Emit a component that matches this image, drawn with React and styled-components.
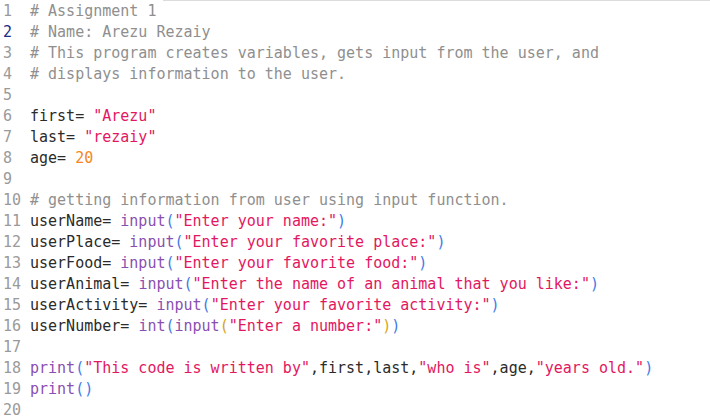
import React from 'react'
import styled, { createGlobalStyle } from 'styled-components'

const GlobalStyle = createGlobalStyle`
    html, body {
        margin: 0;
        padding: 0;
        background: #ffffff;
    }
`

const colors = {
    comment: '#8f8f8f',
    str: '#e3175f',
    num: '#f5871f',
    fn: '#8a4fb0',
    paren: '#3f7be6',
    paren2: '#d9a41a',
    name: '#2b2b2b'
}

const Page = styled.div`
    width: 710px;
    height: 420px;
    overflow: hidden;
    display: flex;
    flex-direction: column;
`

const TopEdge = styled.div`
    height: 3px;
    margin-left: 163px;
    border-top: 1px solid #dcdcdc;
    box-sizing: border-box;
`

const Editor = styled.div`
    display: flex;
    flex-direction: column;
    font-family: "DejaVu Sans Mono", "Liberation Mono", monospace;
    font-size: 15px;
    line-height: 21px;
    white-space: pre;
`

const Row = styled.div`
    display: flex;
    height: 21px;
`

const Gutter = styled.span`
    width: 27px;
    padding-left: 3px;
    color: ${p => p.$active ? '#1b2a8a' : '#9a9a9a'};
`

const Code = styled.span`
    color: ${colors.name};
`

const Tok = styled.span`
    color: ${p => colors[p.$k]};
`

const C = (t) => <Tok $k="comment">{t}</Tok>
const S = (t) => <Tok $k="str">{t}</Tok>
const N = (t) => <Tok $k="num">{t}</Tok>
const F = (t) => <Tok $k="fn">{t}</Tok>
const P = (t) => <Tok $k="paren">{t}</Tok>
const Q = (t) => <Tok $k="paren2">{t}</Tok>

const inputLine = (name, prompt) => [
    name + '= ', F('input'), P('('), S(`"${prompt}"`), P(')')
]

const lines = [
    [C('# Assignment 1')],
    [C('# Name: Arezu Rezaiy')],
    [C('# This program creates variables, gets input from the user, and')],
    [C('# displays information to the user.')],
    [],
    ['first= ', S('"Arezu"')],
    ['last= ', S('"rezaiy"')],
    ['age= ', N('20')],
    [],
    [C('# getting information from user using input function.')],
    inputLine('userName', 'Enter your name:'),
    inputLine('userPlace', 'Enter your favorite place:'),
    inputLine('userFood', 'Enter your favorite food:'),
    inputLine('userAnimal', 'Enter the name of an animal that you like:'),
    inputLine('userActivity', 'Enter your favorite activity:'),
    ['userNumber= ', F('int'), P('('), F('input'), Q('('), S('"Enter a number:"'), Q(')'), P(')')],
    [],
    [F('print'), P('('), S('"This code is written by"'), ',first,last,', S('"who is"'), ',age,', S('"years old."'), P(')')],
    [F('print'), P('()')],
    []
]

export default function App() {
    return (
        <Page>
            <GlobalStyle />
            <TopEdge />
            <Editor>
                {lines.map((parts, i) => (
                    <Row key={`line${i}`}>
                        <Gutter $active={i === 1}>{i + 1}</Gutter>
                        <Code>
                            {parts.map((p, j) => <React.Fragment key={j}>{p}</React.Fragment>)}
                        </Code>
                    </Row>
                ))}
            </Editor>
        </Page>
    )
}
